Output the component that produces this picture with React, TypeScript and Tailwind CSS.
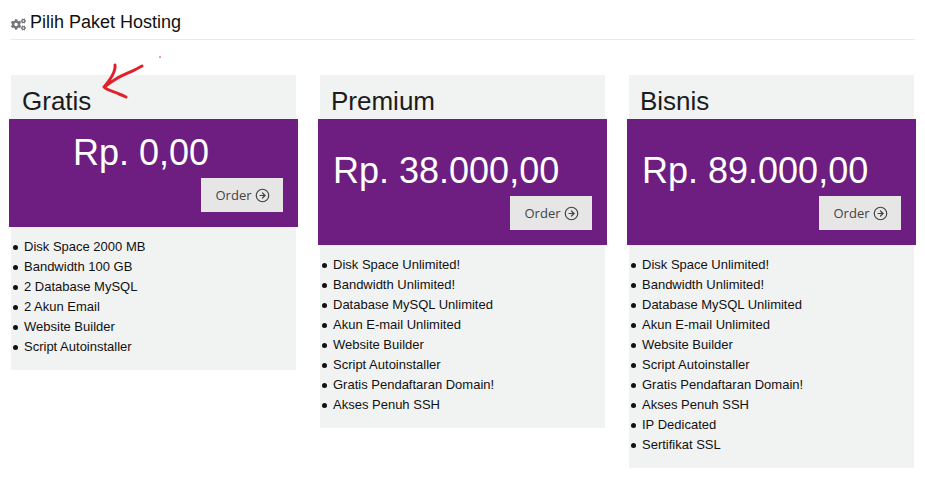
import { CircleArrowRight } from 'lucide-react';
import { FaCogs } from 'react-icons/fa';

interface Plan {
  name: string;
  price: string;
  priceClass: string;
  features: string[];
}

const unlimited = [
  'Disk Space Unlimited!',
  'Bandwidth Unlimited!',
  'Database MySQL Unlimited',
  'Akun E-mail Unlimited',
  'Website Builder',
  'Script Autoinstaller',
  'Gratis Pendaftaran Domain!',
  'Akses Penuh SSH',
];

const plans: Plan[] = [
  {
    name: 'Gratis',
    price: 'Rp. 0,00',
    priceClass: 'pl-[64px] pt-[13px]',
    features: [
      'Disk Space 2000 MB',
      'Bandwidth 100 GB',
      '2 Database MySQL',
      '2 Akun Email',
      'Website Builder',
      'Script Autoinstaller',
    ],
  },
  {
    name: 'Premium',
    price: 'Rp. 38.000,00',
    priceClass: 'pl-[15px] pt-[31px]',
    features: unlimited,
  },
  {
    name: 'Bisnis',
    price: 'Rp. 89.000,00',
    priceClass: 'pl-[15px] pt-[31px]',
    features: [...unlimited, 'IP Dedicated', 'Sertifikat SSL'],
  },
];

export default function App() {
  return (
    <div className="relative h-[480px] w-[925px] overflow-hidden bg-white px-[9px] font-['Liberation_Sans',Arial,sans-serif] text-[#111]">
      <div className="ml-[2px] flex h-[40px] w-[904px] items-end gap-[4px] border-b border-[#eaeaea] pb-[6px] text-[18px] leading-[22px]">
        <FaCogs className="mb-[1px] text-[15px] text-[#777]" />
        <span>Pilih Paket Hosting</span>
      </div>

      <div className="mt-[35px] flex items-start gap-[20px]">
        {plans.map((plan) => (
          <div key={plan.name} className="mx-[2px] w-[285px] bg-[#f1f2f2]">
            <h3 className="h-[44px] pl-[11px] pt-[11px] text-[26px] leading-[30px] text-[#1c1c1c]">{plan.name}</h3>
            <div className="mx-[-2px] bg-[#6d1e80] pb-[15px]">
              <div className={`text-[36px] leading-[41px] text-white ${plan.priceClass}`}>{plan.price}</div>
              <div className="mt-[5px] flex justify-end pr-[15px]">
                <button className="flex h-[34px] w-[82px] items-center justify-center gap-[3px] bg-[#e6e6e6] pl-[1px] pt-[1px] font-['Open_Sans',sans-serif] text-[13px] text-[#444]">
                  Order
                  <CircleArrowRight size={15} strokeWidth={1.9} />
                </button>
              </div>
            </div>
            <ul className="pb-[13px] pl-[2px] pt-[10px] text-[13px] leading-[20px]">
              {plan.features.map((feature) => (
                <li key={feature} className="flex items-center gap-[6px]">
                  <span className="h-[5px] w-[5px] rounded-full bg-[#111]" />
                  {feature}
                </li>
              ))}
            </ul>
          </div>
        ))}
      </div>

      {/* hand drawn red arrow on top of the first card */}
      <svg className="absolute left-[95px] top-[50px]" width="75" height="55" viewBox="95 50 75 55" fill="none">
        <path
          d="M142 66 C132 72 124 74 116 79 C111 82 107 85 104 87 C108 91 114 91 119 94 C122 95 124 96 126 97 M115 65 C116 72 110 80 104 87"
          stroke="#e0212b"
          strokeWidth="3"
          strokeLinecap="round"
          strokeLinejoin="round"
        />
        <circle cx="160" cy="57" r="0.8" fill="#c8283c" />
      </svg>
    </div>
  );
}
